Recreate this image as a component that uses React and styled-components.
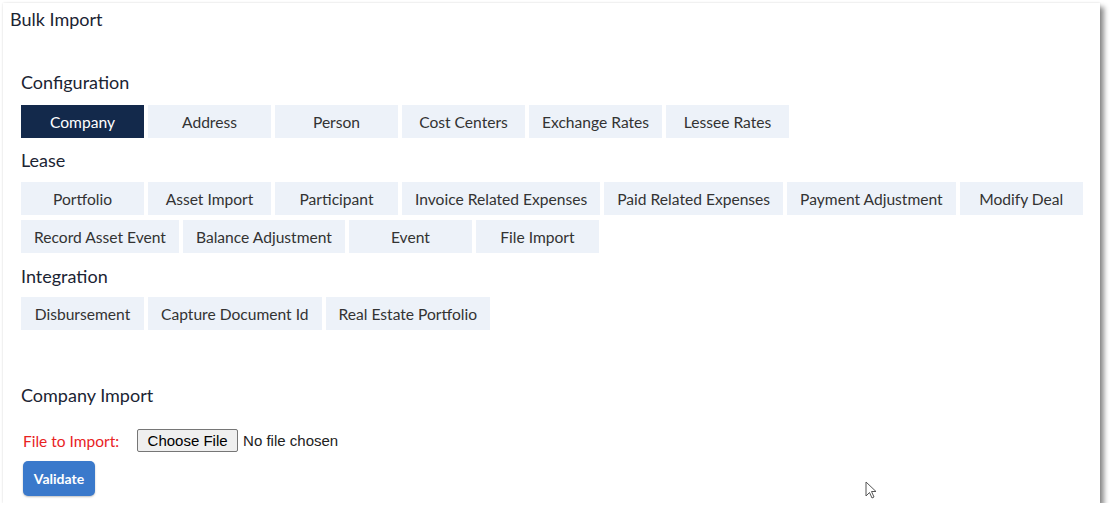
import styled, { createGlobalStyle } from 'styled-components';

const Global = createGlobalStyle`
  body {
    margin: 0;
    background: #fff;
    font-family: Lato, "Open Sans", sans-serif;
  }
`;

const Panel = styled.div`
  position: relative;
  box-sizing: border-box;
  margin: 3px 0 0 3px;
  width: 1097px;
  height: 500px;
  padding: 6px 7px 0;
  background: #fff;
  box-shadow: 4px 4px 5px rgba(0, 0, 0, 0.45), 0 0 2px rgba(0, 0, 0, 0.12);
`;

const Title = styled.h1`
  margin: 0;
  font-size: 18px;
  line-height: 20px;
  font-weight: 400;
  color: #1b2433;
`;

const Body = styled.div`
  padding: 0 0 0 11px;
`;

const Heading = styled.h2`
  margin: ${(p) => (p.$top ? `${p.$top}px` : '11px')} 0 ${(p) => p.$bottom || 11}px;
  font-size: 18px;
  line-height: 22px;
  font-weight: 400;
  color: #1b2433;
`;

const Tabs = styled.div`
  display: flex;
  flex-wrap: wrap;
  gap: 5px 4px;
`;

const Tab = styled.button`
  box-sizing: border-box;
  min-width: 123px;
  height: 33px;
  padding: 0 13px;
  border: none;
  font-family: Lato, sans-serif;
  font-size: 15.6px;
  color: ${(p) => (p.$active ? '#fff' : '#333')};
  background: ${(p) => (p.$active ? '#13294b' : '#edf2f9')};
  cursor: pointer;
`;

const FileRow = styled.div`
  display: flex;
  align-items: center;
  gap: 18px;
  margin: 23px 0 0 2px;
`;

const Label = styled.label`
  font-size: 15.5px;
  color: #e8231f;
`;

const FileInput = styled.input`
  font-family: "Liberation Sans", Arial, sans-serif;
  font-size: 15px;
  color: #222;

  &::file-selector-button {
    font: inherit;
    padding: 2px 9.5px;
    margin-right: 5px;
    border: 1px solid #767676;
    border-radius: 2px;
    background: #efefef;
    color: #000;
  }
`;

const Validate = styled.button`
  margin: 9px 0 0 2px;
  width: 72px;
  height: 35px;
  border: none;
  border-radius: 5px;
  background: #3a79cb;
  color: #fff;
  font-family: Lato, sans-serif;
  font-weight: 700;
  font-size: 14px;
  box-shadow: 0 1px 2px rgba(0, 0, 0, 0.25);
`;

const Cursor = styled.svg`
  position: absolute;
  left: 862px;
  top: 478px;
`;

const groups = [
  {
    name: 'Configuration',
    top: 42,
    bottom: 12,
    items: ['Company', 'Address', 'Person', 'Cost Centers', 'Exchange Rates', 'Lessee Rates'],
  },
  {
    name: 'Lease',
    items: [
      'Portfolio',
      'Asset Import',
      'Participant',
      'Invoice Related Expenses',
      'Paid Related Expenses',
      'Payment Adjustment',
      'Modify Deal',
      'Record Asset Event',
      'Balance Adjustment',
      'Event',
      'File Import',
    ],
  },
  {
    name: 'Integration',
    top: 12,
    bottom: 10,
    items: ['Disbursement', 'Capture Document Id', 'Real Estate Portfolio'],
  },
];

const App = () => (
  <>
    <Global />
    <Panel>
      <Title>Bulk Import</Title>
      <Body>
        {groups.map((g) => (
          <div key={g.name}>
            <Heading $top={g.top} $bottom={g.bottom}>
              {g.name}
            </Heading>
            <Tabs>
              {g.items.map((it) => (
                <Tab key={it} $active={it === 'Company'}>
                  {it}
                </Tab>
              ))}
            </Tabs>
          </div>
        ))}
        <Heading $top={54}>Company Import</Heading>
        <FileRow>
          <Label>File to Import:</Label>
          <FileInput type="file" />
        </FileRow>
        <Validate>Validate</Validate>
      </Body>
      <Cursor width="12" height="19" viewBox="0 0 12 19">
        <path d="M1 1 L1 15 L4.5 11.5 L7 17 L9 16 L6.5 10.5 L11 10.5 Z" fill="#fff" stroke="#555" strokeWidth="1" />
      </Cursor>
    </Panel>
  </>
);

export default App;
